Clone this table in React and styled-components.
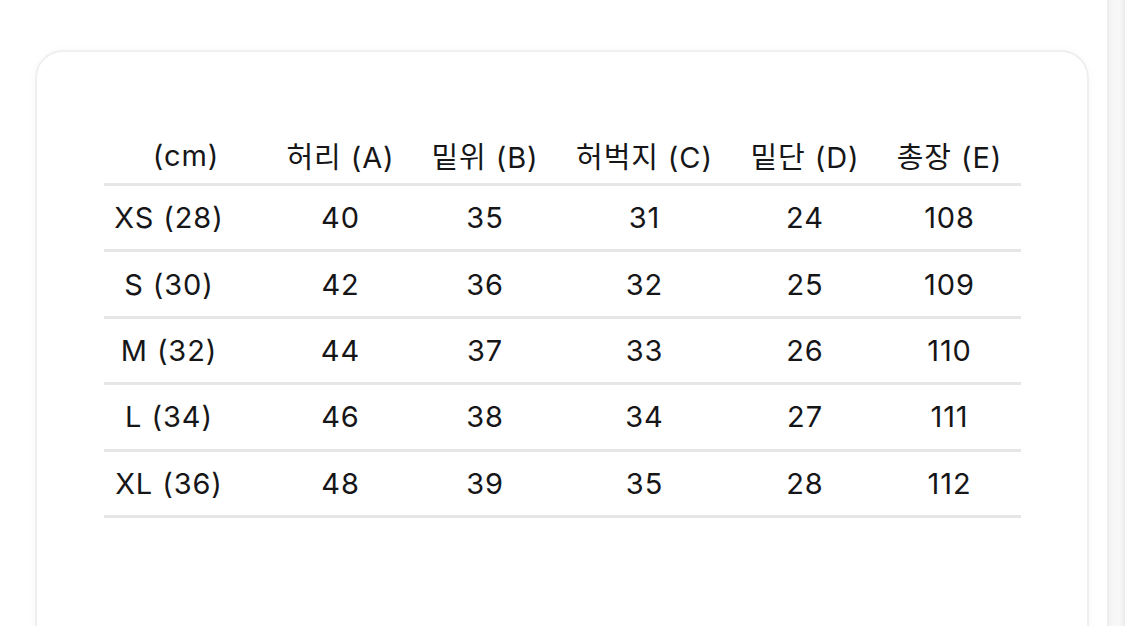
import React from "react";
import styled, { createGlobalStyle } from "styled-components";

const Global = createGlobalStyle`
  html, body { margin: 0; padding: 0; background: #ffffff; }
  body { font-family: Inter, "Noto Sans CJK KR", "Noto Sans", sans-serif; }
`;

const Page = styled.div`
  width: 1125px;
  height: 626px;
  overflow: hidden;
  display: flex;
  align-items: flex-start;
  padding: 50px 0 0 35px;
  box-sizing: border-box;
  gap: 18px;
  background: #ffffff;
`;

const Card = styled.div`
  flex: 0 0 1054px;
  height: 620px;
  box-sizing: border-box;
  background: #ffffff;
  border: 2px solid #efefef;
  border-radius: 28px;
  box-shadow: 0 0 10px rgba(0, 0, 0, 0.03);
  padding: 75px 0 0 67px;
`;

const SideStrip = styled.div`
  flex: 0 0 18px;
  align-self: stretch;
  margin-top: -50px;
  background: linear-gradient(90deg, #ececec 0%, #f6f6f6 25%, #f8f8f8 70%, #ebebeb 100%);
`;

const Grid = styled.div`
  display: grid;
  grid-template-columns: 164px 145px 144px 175px 146px 143px;
  width: 917px;
  color: #161618;
  font-size: 29px;
  letter-spacing: 0.9px;
`;

const HeadCell = styled.div`
  height: 59px;
  box-sizing: border-box;
  display: flex;
  align-items: center;
  justify-content: center;
  white-space: nowrap;
  border-bottom: 3px solid #e6e6e6;
`;

const Cell = styled.div`
  height: 66.4px;
  box-sizing: border-box;
  display: flex;
  align-items: center;
  justify-content: center;
  white-space: nowrap;
  border-bottom: 3px solid #e6e6e6;
  padding-right: ${(p) => (p.$first ? "34px" : "0")};
`;

const headers = ["(cm)", "허리 (A)", "밑위 (B)", "허벅지 (C)", "밑단 (D)", "총장 (E)"];
const rows = [
  ["XS (28)", "40", "35", "31", "24", "108"],
  ["S (30)", "42", "36", "32", "25", "109"],
  ["M (32)", "44", "37", "33", "26", "110"],
  ["L (34)", "46", "38", "34", "27", "111"],
  ["XL (36)", "48", "39", "35", "28", "112"],
];

export default function App() {
  return (
    <>
      <Global />
      <Page>
        <Card>
          <Grid>
            {headers.map((h) => (
              <HeadCell key={h}>{h}</HeadCell>
            ))}
            {rows.map((r) =>
              r.map((v, i) => (
                <Cell key={r[0] + i} $first={i === 0}>
                  {v}
                </Cell>
              ))
            )}
          </Grid>
        </Card>
        <SideStrip />
      </Page>
    </>
  );
}
